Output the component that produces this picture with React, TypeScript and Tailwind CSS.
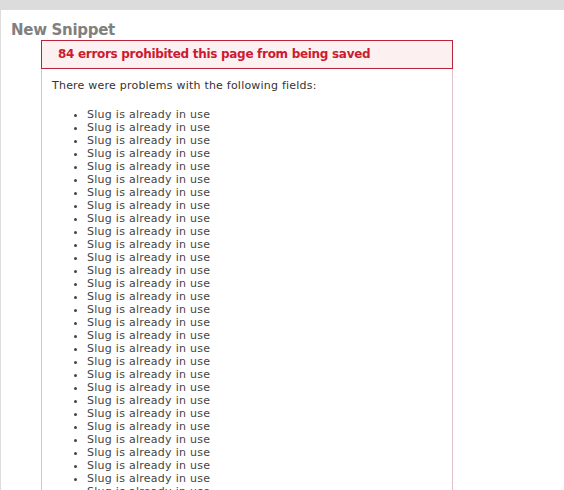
import React from 'react';

// only the rows that fit in the window are rendered (the page is cut off below)
const errors: string[] = Array.from({ length: 30 }, () => 'Slug is already in use');

export default function App() {
  return (
    <div className="h-[490px] overflow-hidden bg-[#dcdcdc] pt-[10px] pl-px" style={{ fontFamily: '"DejaVu Sans", Verdana, sans-serif' }}>
      <div className="bg-white min-h-[480px]">
        <h1 className="pl-[10px] pt-[11px] text-[15px] leading-[19px] font-bold tracking-[-0.3px] text-[#808080]">New Snippet</h1>
        <div className="ml-[40px] w-[412px] border-x border-[#e0c0c8]">
          <div className="-mx-px h-[29px] border border-[#b8243a] bg-[#fdf0f1] pl-[16px] text-[12px] font-bold leading-[27px] tracking-[-0.3px] text-[#cc1a30]">
            84 errors prohibited this page from being saved
          </div>
          <p className="pl-[10px] pt-[10px] text-[11px] leading-[13px] tracking-[0.22px] text-[#333]">
            There were problems with the following fields:
          </p>
          <ul className="mt-[16px] pl-[45px] list-disc text-[11px] leading-[13px] tracking-[0.27px] text-[#444]">
            {errors.map((e, i) => (
              <li key={i}>{e}</li>
            ))}
          </ul>
        </div>
      </div>
    </div>
  );
}
